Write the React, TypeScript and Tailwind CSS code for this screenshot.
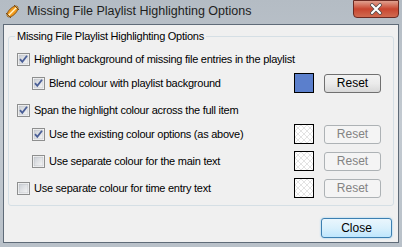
import type { ReactNode } from "react";

const font = { fontFamily: '"Liberation Sans", Arial, sans-serif' };

function CheckBox({ checked }: { checked: boolean }) {
  return (
    <svg width="13" height="13" viewBox="0 0 13 13" className="shrink-0">
      <defs>
        <linearGradient id="cbg" x1="0" y1="0" x2="1" y2="1">
          <stop offset="0" stopColor="#cbcfd5" />
          <stop offset="1" stopColor="#f6f6f6" />
        </linearGradient>
      </defs>
      <rect x="0.5" y="0.5" width="12" height="12" fill="#fff" stroke="#8e8f8f" />
      <rect x="2" y="2" width="9" height="9" fill="url(#cbg)" stroke="#b9bcc1" strokeWidth="0.6" />
      {checked && (
        <path d="M3 6.2 L5.3 8.8 L10 2.8" fill="none" stroke="#4a5f97" strokeWidth="1.8" />
      )}
    </svg>
  );
}

function Swatch({ color }: { color?: string }) {
  return (
    <div className="w-[20px] h-[20px] border border-black shrink-0 bg-white">
      {color ? (
        <div className="w-full h-full" style={{ background: color }} />
      ) : (
        <svg width="18" height="18" viewBox="0 0 18 18">
          <path d="M0 6 L6 0 M0 12 L12 0 M0 18 L18 0 M6 18 L18 6 M12 18 L18 12 M0 12 L6 18 M0 6 L12 18 M0 0 L18 18 M6 0 L18 12 M12 0 L18 6" stroke="#e3e3e3" strokeWidth="1" />
        </svg>
      )}
    </div>
  );
}

function ResetBtn({ disabled }: { disabled?: boolean }) {
  return (
    <div
      className={
        disabled
          ? "w-[57px] h-[19px] rounded-[3px] border border-[#adb2b5] bg-[#f4f4f4] text-[#838383] flex items-center justify-center text-[12px]"
          : "w-[57px] h-[19px] rounded-[3px] border border-[#707070] bg-gradient-to-b from-[#f2f2f2] via-[#ebebeb] to-[#d8d8d8] text-black flex items-center justify-center text-[12px]"
      }
    >
      Reset
    </div>
  );
}

// mt = space between this row's top and the previous one's bottom
function Row({
  indent,
  checked,
  label,
  mt,
  right,
}: {
  indent?: boolean;
  checked: boolean;
  label: string;
  mt: string;
  right?: ReactNode;
}) {
  return (
    <div className={`flex items-center h-[20px] ${mt}`}>
      <div className={`flex items-center gap-[4px] flex-1 ${indent ? "pl-[23px]" : "pl-[8px]"}`}>
        <CheckBox checked={checked} />
        <span className="text-[11px] tracking-[-0.25px] text-black whitespace-nowrap">{label}</span>
      </div>
      {right}
    </div>
  );
}

function Right({ color, disabled }: { color?: string; disabled?: boolean }) {
  return (
    <div className="flex items-center gap-[10px] pr-[12px]">
      <Swatch color={color} />
      <ResetBtn disabled={disabled} />
    </div>
  );
}

export default function App() {
  return (
    <div
      className="w-[402px] h-[247px] flex flex-col bg-gradient-to-b from-[#b4bcc4] via-[#c3cad1] to-[#b9c1c9] overflow-hidden"
      style={font}
    >
      {/* title bar */}
      <div className="h-[24px] flex items-start shrink-0">
        <div className="flex items-center gap-[6px] pl-[4px] pt-[2px] flex-1">
          <svg width="17" height="17" viewBox="0 0 17 17">
            <ellipse cx="8.5" cy="8.5" rx="7" ry="3.4" transform="rotate(-45 8.5 8.5)" fill="#f29a1c" stroke="#7a4a10" strokeWidth="0.8" />
            <path d="M4 13 L13 4" stroke="#fff3c8" strokeWidth="1.4" />
            <path d="M2 10 L7 15 M10 2 L15 7" stroke="#7a4a10" strokeWidth="1" />
          </svg>
          <span className="text-[12.5px] text-[#1e1e1e]">Missing File Playlist Highlighting Options</span>
        </div>
        <div className="w-[46px] h-[18px] mr-[3px] rounded-b-[4px] border border-[#6b2a22] bg-gradient-to-b from-[#e0a08f] via-[#c8452f] to-[#d06a50] flex items-center justify-center">
          <svg width="14" height="12" viewBox="0 0 14 12">
            <path d="M3 2 L11 10 M11 2 L3 10" stroke="#4a4a4a" strokeWidth="3.6" strokeLinecap="round" />
            <path d="M3 2 L11 10 M11 2 L3 10" stroke="#ffffff" strokeWidth="2.2" strokeLinecap="round" />
          </svg>
        </div>
      </div>

      {/* client area */}
      <div className="flex-1 mx-[3px] mb-[4px] border border-[#5f6b78] bg-[#f0f0f0] flex flex-col px-[4px]">
        <fieldset className="border border-[#d5dfe5] rounded-[3px] mt-[4px] h-[177px] px-0 pb-0">
          <legend className="ml-[6px] px-[2px] text-[11px] tracking-[-0.25px] text-black leading-[14px]">
            Missing File Playlist Highlighting Options
          </legend>
          <div className="flex flex-col pt-[6px]">
            <Row checked label="Highlight background of missing file entries in the playlist" mt="mt-0" />
            <Row indent checked label="Blend colour with playlist background" mt="mt-[4px]" right={<Right color="#5b7fcc" />} />
            <Row checked label="Span the highlight colour across the full item" mt="mt-[7px]" />
            <Row indent checked label="Use the existing colour options (as above)" mt="mt-[4px]" right={<Right disabled />} />
            <Row indent checked={false} label="Use separate colour for the main text" mt="mt-[7px]" right={<Right disabled />} />
            <Row checked={false} label="Use separate colour for time entry text" mt="mt-[7px]" right={<Right disabled />} />
          </div>
        </fieldset>
        <div className="flex justify-end pt-[12px] pr-[2px]">
          <div className="w-[71px] h-[20px] rounded-[3px] border border-[#3c7fb1] bg-gradient-to-b from-[#eaf6fd] via-[#d9f0fc] to-[#bee6fd] shadow-[0_0_2px_#7fc4ef] flex items-center justify-center text-[12px] text-black">
            Close
          </div>
        </div>
      </div>
    </div>
  );
}
